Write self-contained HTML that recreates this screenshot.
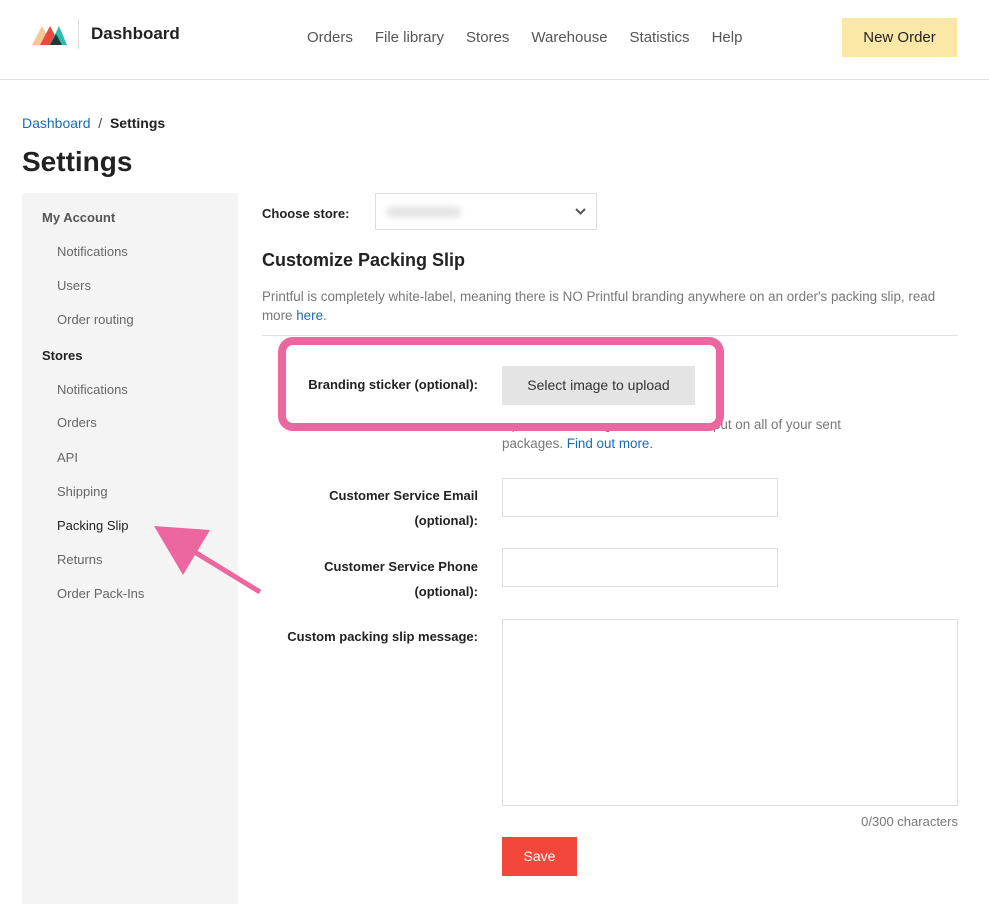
<!DOCTYPE html>
<html><head><style>
*{box-sizing:border-box;margin:0;padding:0}
body{width:989px;height:904px;background:#fff;font-family:"Liberation Sans",sans-serif;color:#222;position:relative;overflow:hidden}
.a{position:absolute}
.hdr{left:0;top:0;width:989px;height:80px;border-bottom:1px solid #e2e2e2}
.nav span{margin-right:22px;font-size:15px;color:#555}
.side{left:22px;top:193px;width:216px;height:711px;background:#f4f4f4}
.side div{position:absolute;font-size:13px;color:#666}
.side .h{font-weight:bold;color:#555}
.lbl{font-size:13px;font-weight:bold;color:#222;text-align:right}
.inp{border:1px solid #ddd;background:#fff}
.t{font-size:13px;color:#777}
a{color:#1a6bb5;text-decoration:none}
</style></head><body>
<div class="a hdr"></div>
<svg class="a" style="left:32px;top:22px" width="36" height="24" viewBox="0 0 36 24">
<polygon points="0,23 10,4 20,23" fill="#f3c896"/>
<polygon points="8,23 18,4 28,23" fill="#e84a3d"/>
<polygon points="18,23 27,4 35,23" fill="#2bbcb0"/>
<polygon points="18,23 24,12 30,23" fill="#1d3b35"/>
</svg>
<div class="a" style="left:78px;top:19px;width:1px;height:30px;background:#ddd"></div>
<div class="a" style="left:91px;top:24px;font-size:17px;font-weight:bold">Dashboard</div>
<div class="a nav" style="left:307px;top:29px"><span>Orders</span><span>File library</span><span>Stores</span><span>Warehouse</span><span>Statistics</span><span>Help</span></div>
<div class="a" style="left:842px;top:18px;width:115px;height:39px;background:#fbe8a6;font-size:15px;text-align:center;line-height:39px">New Order</div>
<div class="a" style="left:22px;top:115px;font-size:14px"><a>Dashboard</a> <span style="color:#444">&nbsp;/&nbsp;</span> <b>Settings</b></div>
<div class="a" style="left:22px;top:146px;font-size:28px;font-weight:bold">Settings</div>
<div class="a side">
<div class="h" style="left:20px;top:17px">My Account</div>
<div style="left:35px;top:51px">Notifications</div>
<div style="left:35px;top:85px">Users</div>
<div style="left:35px;top:119px">Order routing</div>
<div class="h" style="left:20px;top:155px;color:#222">Stores</div>
<div style="left:35px;top:189px">Notifications</div>
<div style="left:35px;top:222px">Orders</div>
<div style="left:35px;top:257px">API</div>
<div style="left:35px;top:291px">Shipping</div>
<div style="left:35px;top:325px;color:#222">Packing Slip</div>
<div style="left:35px;top:359px">Returns</div>
<div style="left:35px;top:393px">Order Pack-Ins</div>
</div>
<div class="a lbl" style="left:262px;top:206px;text-align:left">Choose store:</div>
<div class="a inp" style="left:375px;top:193px;width:222px;height:37px"><div style="position:absolute;left:10px;top:12px;width:75px;height:12px;background:#e6e6e6;border-radius:6px;filter:blur(3px)"></div><svg style="position:absolute;right:10px;top:14px" width="11" height="8"><path d="M1 1l4.5 4.5L10 1" stroke="#555" stroke-width="2" fill="none"/></svg></div>
<div class="a" style="left:262px;top:250px;font-size:18px;font-weight:bold">Customize Packing Slip</div>
<div class="a t" style="left:262px;top:287px;width:720px;line-height:19px;font-size:13.4px">Printful is completely white-label, meaning there is NO Printful branding anywhere on an order's packing slip, read<br>more <a>here</a>.</div>
<div class="a" style="left:262px;top:335px;width:696px;height:1px;background:#e2e2e2"></div>
<div class="a t" style="left:502px;top:415px;width:480px;line-height:19px;font-size:13.4px">Upload a branding sticker that we'll put on all of your sent<br>packages. <a>Find out more.</a></div>
<div class="a" style="left:278px;top:337px;width:446px;height:94px;border:8px solid #ec67a0;border-radius:15px;background:#fff"></div>
<div class="a lbl" style="left:300px;top:377px;width:178px">Branding sticker (optional):</div>
<div class="a" style="left:502px;top:366px;width:193px;height:39px;background:#e4e4e4;font-size:14px;color:#333;text-align:center;line-height:39px">Select image to upload</div>
<div class="a lbl" style="left:300px;top:483px;width:178px;line-height:25px">Customer Service Email<br>(optional):</div>
<div class="a inp" style="left:502px;top:478px;width:276px;height:39px"></div>
<div class="a lbl" style="left:300px;top:554px;width:178px;line-height:25px">Customer Service Phone<br>(optional):</div>
<div class="a inp" style="left:502px;top:548px;width:276px;height:39px"></div>
<div class="a lbl" style="left:270px;top:629px;width:208px">Custom packing slip message:</div>
<div class="a inp" style="left:502px;top:619px;width:456px;height:187px"></div>
<div class="a t" style="left:800px;top:814px;width:158px;text-align:right">0/300 characters</div>
<div class="a" style="left:502px;top:837px;width:75px;height:39px;background:#f2473a;color:#fff;font-size:14px;text-align:center;line-height:39px">Save</div>
<svg class="a" style="left:0;top:0" width="989" height="904"><line x1="260" y1="592" x2="175" y2="540" stroke="#ec67a0" stroke-width="5"/><polygon points="154,526 210,530 183,575" fill="#ec67a0"/></svg>
</body></html>
